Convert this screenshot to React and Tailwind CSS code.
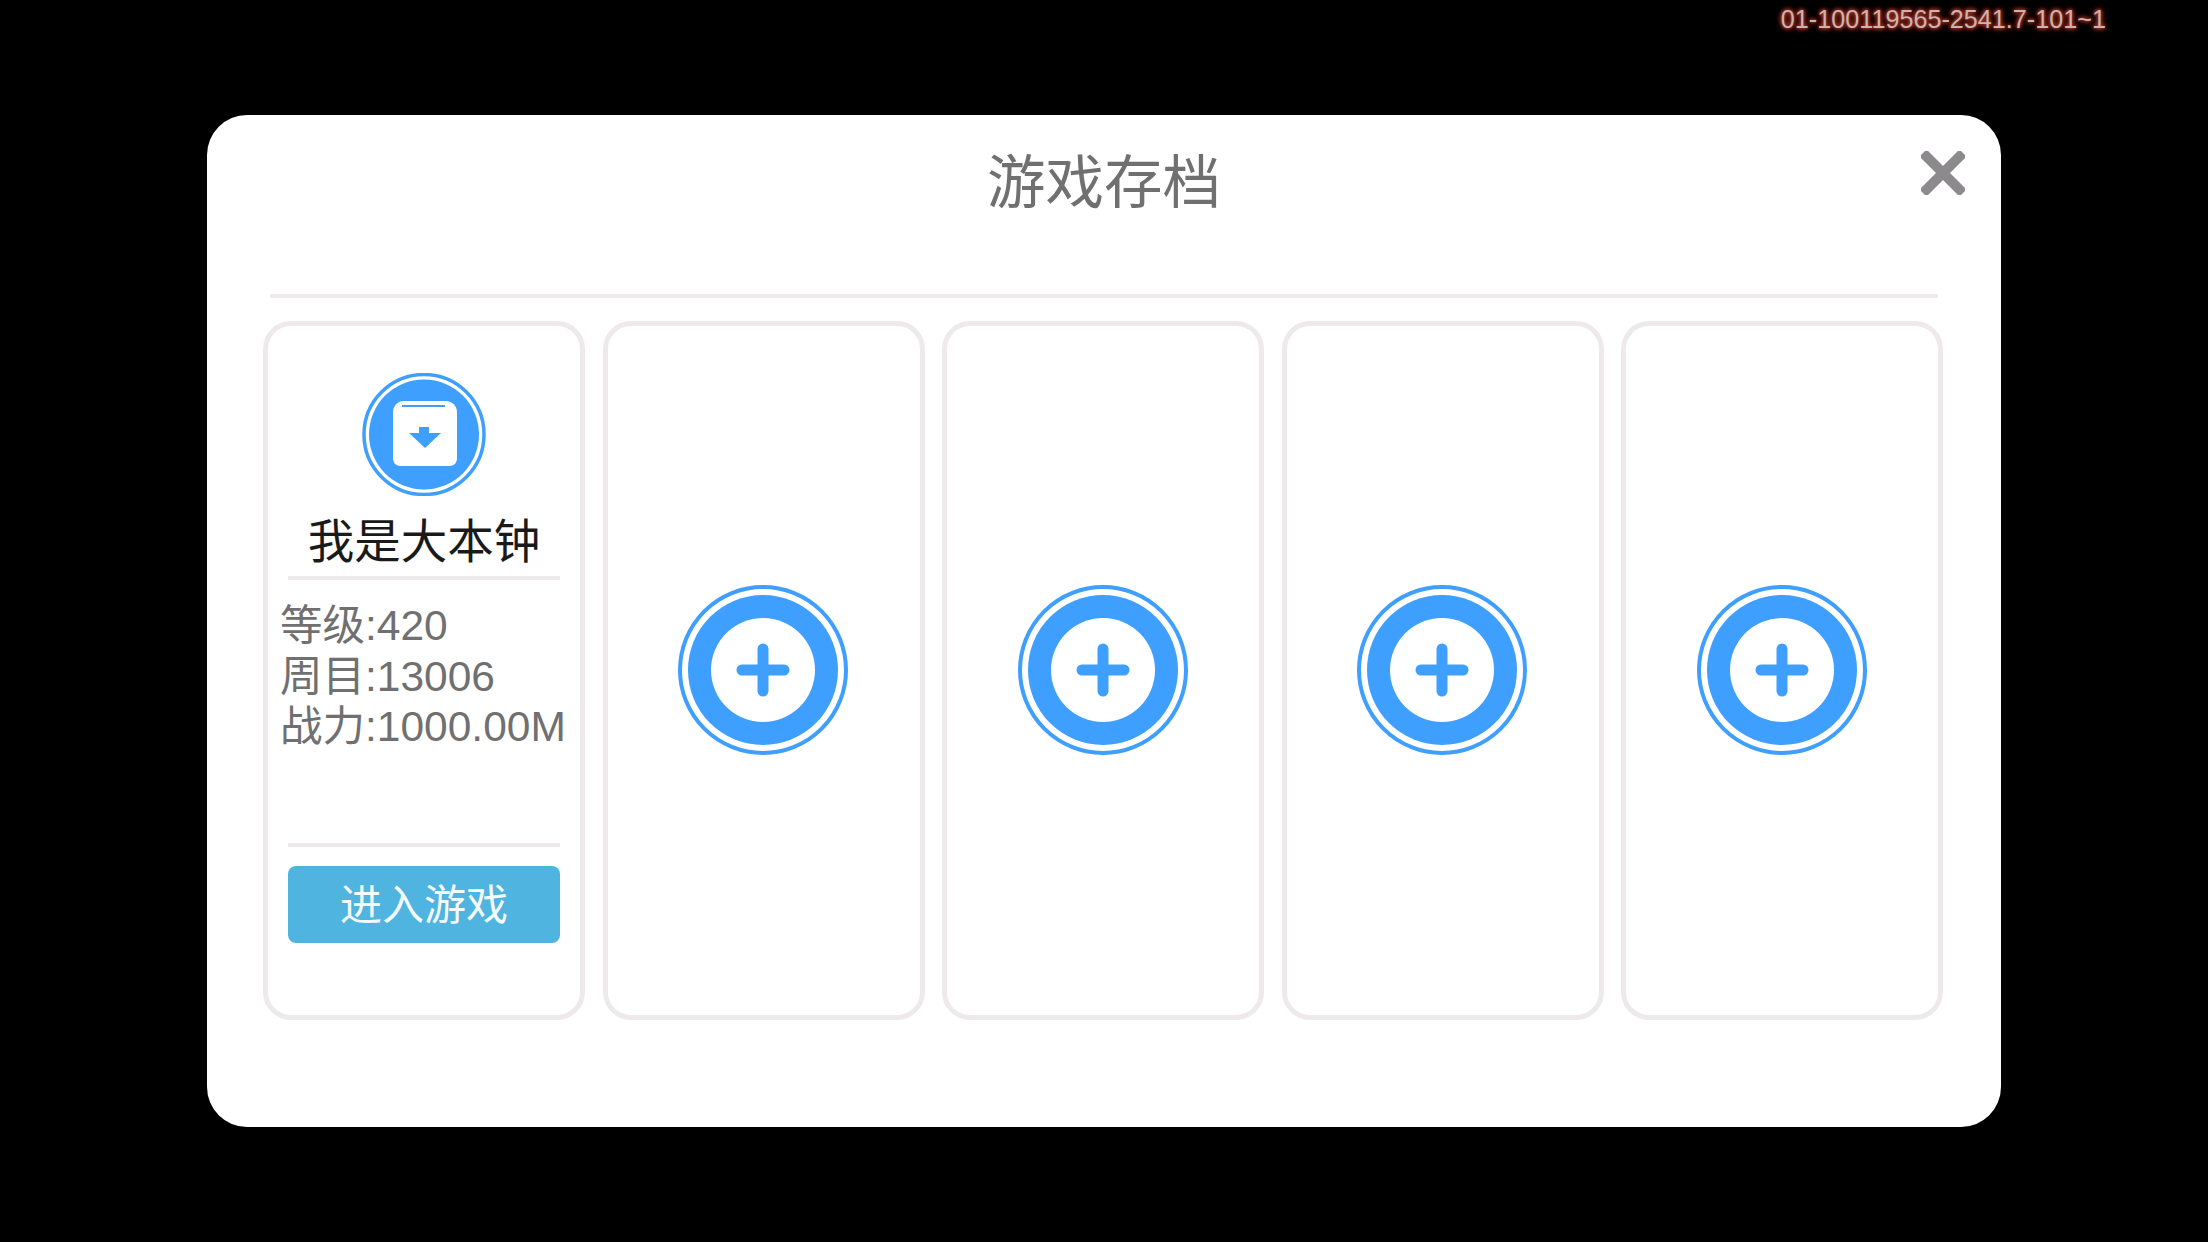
const AddIcon = () => (
  <svg width="170" height="170" viewBox="0 0 170 170">
    <circle cx="85" cy="85" r="83" fill="#fff" stroke="#3f9fff" strokeWidth="4" />
    <circle cx="85" cy="85" r="75" fill="#3f9fff" />
    <circle cx="85" cy="85" r="52" fill="#fff" />
    <path d="M85 64v42M64 85h42" stroke="#3f9fff" strokeWidth="11" strokeLinecap="round" fill="none" />
  </svg>
);

const SaveIcon = () => (
  <svg width="124" height="123" viewBox="0 0 124 123">
    <circle cx="62" cy="61.5" r="60" fill="#fff" stroke="#3f9fff" strokeWidth="3.5" />
    <circle cx="62" cy="61.5" r="55" fill="#3f9fff" />
    <path
      d="M41 28h43c6 0 11 5 11 11v46c0 5-3 8-8 8H39c-5 0-8-3-8-8V39c0-6 5-11 10-11z"
      fill="#fff"
    />
    <path d="M40 33h43" stroke="#3f9fff" strokeWidth="2" fill="none" />
    <path d="M57 54h10v6h12L63 75 47 60h10z" fill="#3f9fff" />
  </svg>
);

const CloseIcon = () => (
  <svg width="44" height="44" viewBox="0 0 44 44">
    <path d="M2 2l40 40M42 2L2 42" stroke="#8c8a8c" strokeWidth="10" fill="none" />
  </svg>
);

const SaveCard = () => (
  <div className="w-[322px] h-[699px] border-[5px] border-[#eeeaec] rounded-[28px] px-[20px] pt-[47px] flex flex-col items-center">
    <SaveIcon />
    <div className="w-full h-[80px] pt-[12px] flex items-center justify-center text-[46.5px] leading-none text-[#1a1a1a]">
      我是大本钟
    </div>
    <div className="w-full h-[4px] bg-[#eeeaec]" />
    <div className="w-[288px] h-[263px] pt-[21px] text-[42.5px] leading-[50.5px] text-[#707070] whitespace-nowrap">
      <div>等级:420</div>
      <div>周目:13006</div>
      <div>战力:1000.00M</div>
    </div>
    <div className="w-full h-[4px] bg-[#eeeaec]" />
    <button className="w-full h-[77px] mt-[19px] pt-[3px] bg-[#50b4e0] rounded-[8px] text-[42px] leading-none text-[#f4fbfe]">
      进入游戏
    </button>
  </div>
);

const EmptyCard = () => (
  <div className="w-[322px] h-[699px] border-[5px] border-[#eeeaec] rounded-[28px] pr-[1px] pb-[1px] flex items-center justify-center">
    <AddIcon />
  </div>
);

export default function App() {
  return (
    <div
      className="w-[2208px] h-[1242px] bg-black overflow-hidden"
      style={{ fontFamily: '"Liberation Sans", "Noto Sans CJK SC", sans-serif' }}
    >
      <div className="h-[115px] pr-[102px] pt-[4px] flex justify-end">
        <span className="text-[25.2px] leading-[30px] text-[#c9b4b1] [text-shadow:0_0_3px_#9c2e22,0_0_4px_#9c2e22,0_0_5px_#9c2e22,0_0_6px_#9c2e22]">
          01-100119565-2541.7-101~1
        </span>
      </div>

      <div className="relative ml-[207px] w-[1794px] h-[1012px] bg-white rounded-[40px] pl-[56px]">
        <div className="h-[179px] -ml-[56px] flex items-center justify-center pb-[43px]">
          <h1 className="text-[58.5px] leading-none font-normal text-[#707070]">游戏存档</h1>
        </div>
        <div className="w-[1668px] h-[4px] ml-[7px] bg-[#eeeaec]" />
        <div className="flex gap-[17.5px] mt-[23px]">
          <SaveCard />
          <EmptyCard />
          <EmptyCard />
          <EmptyCard />
          <EmptyCard />
        </div>
        <div className="absolute top-[36px] right-[36px]">
          <CloseIcon />
        </div>
      </div>
    </div>
  );
}
